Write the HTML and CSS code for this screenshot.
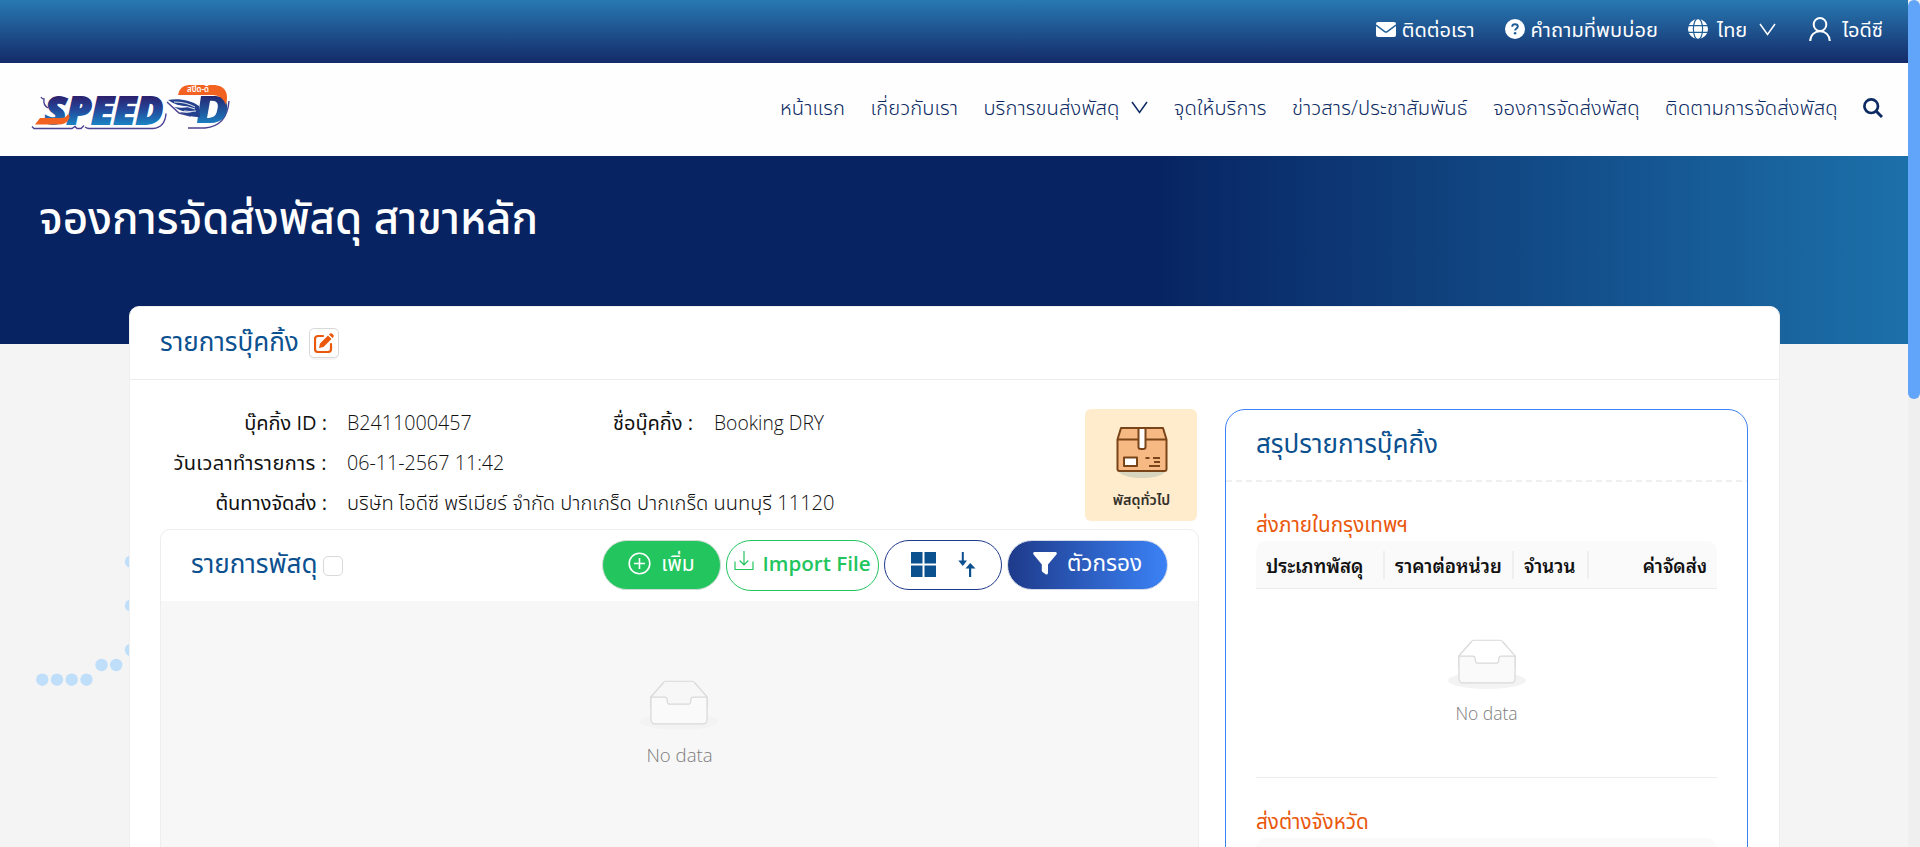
FILE: index.html
```html
<!DOCTYPE html>
<html lang="th">
<head>
<meta charset="utf-8">
<title>SPEED-D</title>
<link rel="stylesheet" href="styles.css">
</head>
<body>
<svg class="defs" width="0" height="0">
  <symbol id="empty" viewBox="0 0 64 41">
    <g transform="translate(0 1)" fill="none">
      <ellipse fill="#f3f3f3" cx="32" cy="33" rx="32" ry="7"/>
      <g stroke="#d9d9d9">
        <path d="M55 12.76L44.854 1.258C44.367.474 43.656 0 42.907 0H21.093c-.749 0-1.46.474-1.947 1.257L9 12.761V22h46v-9.24z"/>
        <path fill="#fafafa" d="M41.613 15.931c0-1.605.994-2.93 2.227-2.931H55v18.137C55 33.26 53.68 35 52.05 35h-40.1C10.32 35 9 33.259 9 31.137V13h11.16c1.233 0 2.227 1.323 2.227 2.928v.022c0 1.605 1.005 2.901 2.237 2.901h14.752c1.232 0 2.237-1.308 2.237-2.913v-.007z"/>
      </g>
    </g>
  </symbol>
</svg>
<div class="page">
  <div class="topbar">
    <a class="top-link contact"><svg width="20" height="15" viewBox="0 0 20 15"><rect width="20" height="15" rx="2" fill="#fff"/><path d="M0 3l8.7 6.6a2.2 2.2 0 0 0 2.6 0L20 3" fill="none" stroke="#1f5f97" stroke-width="1.4"/></svg><span>ติดต่อเรา</span></a>
    <a class="top-link faq"><svg width="20" height="20" viewBox="0 0 20 20"><circle cx="10" cy="10" r="10" fill="#fff"/><path d="M7.2 7.7C7.3 6 8.4 5.3 10 5.3c1.700 0 2.800.9 2.800 2.300 0 1.900-2.700 2-2.700 4" fill="none" stroke="#1f5f97" stroke-width="2"/><circle cx="10.100" cy="14.300" r="1.300" fill="#1f5f97"/></svg><span>คำถามที่พบบ่อย</span></a>
    <a class="top-link lang"><svg width="20" height="20" viewBox="0 0 20 20"><circle cx="10" cy="10" r="10" fill="#fff"/><g fill="none" stroke="#1f5f97" stroke-width="1.200"><ellipse cx="10" cy="10" rx="4.600" ry="10.500"/><path d="M0 6.700h20M0 13.300h20"/></g></svg><span>ไทย</span><svg class="chev" width="17" height="13" viewBox="0 0 17 13"><path d="M1 1l7.500 10.500L16 1" fill="none" stroke="#fff" stroke-width="1.500"/></svg></a>
    <a class="top-link user"><svg width="22" height="24" viewBox="0 0 22 24" fill="none" stroke="#fff" stroke-width="2"><ellipse cx="11" cy="7.500" rx="6.300" ry="6.500"/><path d="M1.200 24C1.500 18 5.500 14.300 11 14.300s9.500 3.700 9.800 9.700"/></svg><span>ไอดีซี</span></a>
  </div>

  <header class="header">
    <svg class="logo" width="210" height="65" viewBox="0 0 210 65">
      <defs>
        <linearGradient id="ink" gradientUnits="userSpaceOnUse" x1="0" y1="-28" x2="0" y2="0"><stop offset="0" stop-color="#2c1e6b"/><stop offset=".5" stop-color="#24479a"/><stop offset="1" stop-color="#1b7fc0"/></linearGradient>
        <linearGradient id="dInk" gradientUnits="userSpaceOnUse" x1="0" y1="20" x2="0" y2="50"><stop offset="0" stop-color="#25246f"/><stop offset="1" stop-color="#1b82c4"/></linearGradient>
      </defs>
      <path d="M11 22q1 2 3 2-1 6 4 9M2 51.500l2 2h38l3-2 2 2h4l3-3M55 52q2 1.500 4 1.500h64q12-1 13-15" fill="none" stroke="#4a4293" stroke-width="1.400"/>
      <text class="logo-word" transform="translate(15 48.500)" textLength="118" lengthAdjust="spacingAndGlyphs" fill="url(#ink)" stroke="url(#ink)" stroke-width="1.800">SPEED</text>
      <path d="M5 49.500l5-6.500h21q5 0 7-4 3 3 0 6.500-3 4-9 4z" fill="#f26322"/>
      <path d="M137 27l12 11 12 3M158 53h17q22-2 24-27" fill="none" stroke="#4a4293" stroke-width="1.400"/>
      <path d="M171 21l-4 27h13c13 0 18-8 17-18-1-7-6-9-14-9zm9 5c8-1 9 4 7 10-1 5-4 7-10 7z" fill="url(#dInk)" fill-rule="evenodd"/>
      <path d="M148 20q2-10 11-10h24c13 0 16 9 13 20q-4-10-13-10z" fill="#f26322"/>
      <text class="logo-th" x="157" y="17" textLength="22" lengthAdjust="spacingAndGlyphs" fill="#fff">สปีด-ดี</text>
      <path d="M138 25c10-2 23 0 31 6l1 11c-8 0-15-2-20-5 5 1 9 1 12 0-8 0-13-2-18-5 6 1 10 1 14 0-8-1-14-3-20-7z" fill="#24418f"/>
      <path d="M144 27q12 0 21 5M149 31q9 0 16 3M154 36q6 1 12 0" fill="none" stroke="#fff" stroke-width=".9"/>
    </svg>
    <nav class="nav">
      <a>หน้าแรก</a><a>เกี่ยวกับเรา</a>
      <a class="has-menu">บริการขนส่งพัสดุ<svg width="17" height="13" viewBox="0 0 17 13"><path d="M1 1l7.500 10.500L16 1" fill="none" stroke="#0c2a63" stroke-width="1.500"/></svg></a>
      <a>จุดให้บริการ</a><a>ข่าวสาร/ประชาสัมพันธ์</a><a>จองการจัดส่งพัสดุ</a><a>ติดตามการจัดส่งพัสดุ</a>
      <svg class="search" width="20" height="20" viewBox="0 0 20 20" fill="none" stroke="#0c2a63"><circle cx="8.200" cy="8.200" r="6.800" stroke-width="2.700"/><path d="M13 13l6 6" stroke-width="3"/></svg>
    </nav>
  </header>

  <section class="hero"><h1>จองการจัดส่งพัสดุ สาขาหลัก</h1></section>

  <svg class="dots" width="110" height="132" viewBox="0 0 110 132" fill="#bfdefa"><circle cx="102" cy="7.700" r="6.200"/><circle cx="102" cy="51.700" r="6.200"/><circle cx="102" cy="96" r="6.200"/><circle cx="72.500" cy="111" r="6.200"/><circle cx="87.200" cy="111" r="6.200"/><circle cx="13.300" cy="125.700" r="6.200"/><circle cx="28" cy="125.700" r="6.200"/><circle cx="42.700" cy="125.700" r="6.200"/><circle cx="57.500" cy="125.700" r="6.200"/></svg>

  <main class="card">
    <div class="card-head">
      <h2>รายการบุ๊คกิ้ง</h2>
      <button class="edit"><svg width="20" height="20" viewBox="0 0 20 20"><path d="M9 3H4a3 3 0 0 0-3 3v10a3 3 0 0 0 3 3h10a3 3 0 0 0 3-3v-5" fill="none" stroke="#ea580c" stroke-width="2.200" stroke-linecap="round"/><path d="M5 15l1-4.500 8-8L17.500 6l-8 8zM15 1.500l1-.9q1-.8 2 0l1.400 1.400q.8 1 0 2l-.9 1z" fill="#ea580c"/></svg></button>
    </div>
    <div class="card-body">
      <div class="left">
        <div class="info-row">
          <div class="info">
            <div class="label">บุ๊คกิ้ง ID :</div><div class="value">B2411000457</div>
            <div class="label">ชื่อบุ๊คกิ้ง :</div><div class="value booking">Booking DRY</div>
            <div class="label loose">วันเวลาทำรายการ :</div><div class="value wide">06-11-2567 11:42</div>
            <div class="label">ต้นทางจัดส่ง :</div><div class="value wide addr">บริษัท ไอดีซี พรีเมียร์ จำกัด ปากเกร็ด ปากเกร็ด นนทบุรี 11120</div>
          </div>
          <div class="type">
            <svg width="52" height="54" viewBox="0 0 52 54"><ellipse cx="26" cy="44" rx="24" ry="8" fill="#d8d5bf"/><g stroke="#7a4419" stroke-width="2" stroke-linejoin="round"><path d="M1.500 13.500L5 2h42l3.500 11.500V43q0 2-2 2h-45q-2 0-2-2z" fill="#f7b983"/><path d="M1.500 13.500h49" fill="none"/><path d="M22.500 2h7v19q0 2-2 2h-3q-2 0-2-2z" fill="#fff"/><path d="M8 31.500h13v8.500H8z" fill="#fff"/><path d="M29.500 32h4M37 32h7M38 36h6M33 40h11" fill="none"/></g></svg>
            <span>พัสดุทั่วไป</span>
          </div>
        </div>
        <div class="items">
          <div class="items-head">
            <h2>รายการพัสดุ</h2><span class="check"></span>
            <div class="actions">
              <button class="btn add"><svg width="23" height="23" viewBox="0 0 23 23" fill="none" stroke="#fff" stroke-width="1.600"><circle cx="11.500" cy="11.500" r="10.300"/><path d="M11.500 6v11M6 11.500h11"/></svg>เพิ่ม</button>
              <button class="btn import"><svg class="inbox" width="20" height="20" viewBox="0 0 20 20" fill="none" stroke="#22c55e" stroke-width="1.200"><path d="M1 10.500v8h18v-8M10 0v14M5.700 9.500L10 14l4.300-4.500"/></svg>Import File</button>
              <button class="btn tools"><svg width="25" height="25" viewBox="0 0 25 25" fill="#0b508f"><path d="M0 0h11.500v11.500H0zM13.500 0H25v11.500H13.500zM0 13.500h11.500V25H0zM13.500 13.500H25V25H13.500z"/></svg><svg width="18" height="25" viewBox="0 0 18 25" fill="#0b508f"><path d="M3.800 0h2v8.500H9L4.800 14 .3 8.500h3.500zM11 25h2.200v-8.500H17.500L12.200 11 7.500 16.500H11z"/></svg></button>
              <button class="btn filter"><svg width="24" height="23" viewBox="0 0 24 23" fill="#fff"><path d="M1.300 0h21.400q1.900.8.700 2.500L15 12.500V21q-.3 2-2 1.500L9.500 20q-.7-.6-.7-1.500v-6L.6 2.500Q-.6.800 1.300 0z"/></svg>ตัวกรอง</button>
            </div>
          </div>
          <div class="items-body"><svg class="empty"><use href="#empty"/></svg><p>No data</p></div>
        </div>
      </div>

      <aside class="summary">
        <div class="summary-head"><h2>สรุปรายการบุ๊คกิ้ง</h2></div>
        <div class="summary-body">
          <h3>ส่งภายในกรุงเทพฯ</h3>
          <div class="thead"><span>ประเภทพัสดุ</span><span>ราคาต่อหน่วย</span><span>จำนวน</span><span>ค่าจัดส่ง</span></div>
          <div class="tbody"><svg class="empty"><use href="#empty"/></svg><p>No data</p></div>
          <h3 class="second">ส่งต่างจังหวัด</h3>
          <div class="thead"></div>
        </div>
      </aside>
    </div>
  </main>
</div>
<div class="scrollbar"><div class="thumb"></div></div>
</body>
</html>
```
FILE: styles.css
```css
* { box-sizing: border-box; }
body {
  margin: 0; height: 847px; overflow: hidden; display: flex;
  background: #f4f4f4; color: #111;
  font-family: "Open Sans", "Noto Sans Thai", sans-serif; font-size: 20px;
}
h1, h2, h3, p { margin: 0; font-weight: 400; white-space: nowrap; }
svg { display: block; flex: none; }
button { font: inherit; padding: 0; }
.defs { position: absolute; }
.page { width: 1908px; height: 847px; overflow: hidden; position: relative; }

.scrollbar { width: 12px; background: #efefef; }
.thumb { height: 399px; border-radius: 6px; background: #60a5fa; }

.topbar {
  height: 63px; padding: 0 25px 5px 0;
  display: flex; justify-content: flex-end; align-items: center; gap: 30px;
  background: linear-gradient(#2879b2, #142b69);
  color: #fff; line-height: 28px; white-space: nowrap;
}
.top-link { display: flex; align-items: center; }
.top-link span { padding-top: 1px; }
.contact { gap: 6px; }
.faq { gap: 6px; letter-spacing: .1px; }
.lang { gap: 9px; }
.chev { margin-left: 3px; }
.user { gap: 11px; margin-left: 3px; }

.header {
  height: 93px; padding: 0 25px 0 30px;
  display: flex; align-items: center; justify-content: space-between;
  background: #fefefe;
}
.logo { margin-bottom: 4px; }
.logo-word { font-family: "Open Sans", sans-serif; font-weight: 800; font-style: italic; font-size: 37px; }
.logo-th { font-family: "Noto Sans Thai", sans-serif; font-weight: 600; font-size: 8px; }
.nav {
  display: flex; align-items: center; gap: 25.300px; padding-bottom: 4px;
  color: #0c2a63; font-size: 20.200px; font-weight: 350; letter-spacing: .12px; line-height: 28px; white-space: nowrap;
}
.nav a { padding-bottom: 1px; }
.has-menu { display: flex; align-items: center; gap: 12px; }

.hero {
  height: 188px; padding: 31px 39px;
  background: linear-gradient(90deg, #072361 60%, #1c70aa);
}
.hero h1 { color: #fff; font-size: 43.800px; font-weight: 500; line-height: 60px; }

.dots { position: absolute; left: 29px; top: 554px; }

.card {
  position: relative; width: 1651px; height: 600px; margin: -38px 0 0 129px;
  background: #fff; border: 1px solid #efefef; border-radius: 10px 10px 0 0;
}
h2 { color: #0b508f; font-size: 26px; line-height: 36px; }
.card-head {
  height: 73px; padding: 0 30px 1px 30px; display: flex; align-items: center; gap: 10px;
  border-bottom: 1px solid #ededed;
}
.card-head h2 { padding-bottom: 4px; line-height: 30px; }
.edit {
  width: 30px; height: 30px; display: grid; place-items: center;
  background: #fff; border: 1px solid #d9d9d9; border-radius: 5px; box-shadow: 0 2px 1px #0000000a;
}
.card-body { display: flex; gap: 26px; padding: 29px 30px 0; }
.left { width: 1039px; }
.info-row { display: flex; justify-content: space-between; height: 120px; padding-right: 2px; }
.info {
  display: grid; grid-template-columns: 167px 207px 159px 1fr; grid-auto-rows: 28px; row-gap: 12px;
  line-height: 28px; white-space: nowrap;
}
.label { text-align: right; font-weight: 450; }
.loose { letter-spacing: .4px; }
.value { padding-left: 20px; font-size: 19.700px; font-weight: 350; }
.booking { padding-left: 21px; font-size: 19.300px; }
.wide { grid-column: span 3; }
.addr { font-size: 20.100px; }
.type {
  width: 112px; height: 112px; padding-top: 17px; border-radius: 6px; background: #feeccd;
  display: flex; flex-direction: column; align-items: center; gap: 10px;
  font-size: 14.300px; font-weight: 600; line-height: 20px; color: #33302b;
}
.type svg { margin-left: 2px; }
.type span { margin-left: 1px; }

.items { height: 400px; border: 1px solid #ededed; border-radius: 10px 10px 0 0; }
.items-head { height: 71px; padding: 0 30px 0 30px; display: flex; align-items: center; }
.items-head h2 { padding-bottom: 6px; }
.check { width: 20px; height: 20px; margin: 1px 0 0 5px; border: 1px solid #d9d9d9; border-radius: 5px; }
.actions { display: flex; gap: 5px; margin-left: auto; }
.btn {
  height: 50px; padding-bottom: 4px; border-radius: 25px; border: 1px solid; background: #fff;
  display: flex; align-items: center; justify-content: center; line-height: 28px; white-space: nowrap;
}
.add { width: 119px; gap: 10px; background: #22c55e; border-color: #d0dcd4; color: #fff; font-size: 21px; }
.import { width: 153px; height: 51px; gap: 8px; padding-bottom: 5px; border-color: #22c55e; color: #22c55e; font-size: 20.600px; font-weight: 550; }
.inbox { margin-bottom: 4px; }
.tools { width: 118px; gap: 22px; padding-bottom: 1px; border-color: #1e3a8a; }
.filter { width: 161px; gap: 10px; background: linear-gradient(90deg, #1e3a8a, #3b82f6); border-color: #d3d9e6; color: #fff; font-size: 22.600px; }
.items-body { height: 340px; padding-top: 79px; background: #f7f7f7; }
.empty { width: 78px; height: 50px; margin: 0 auto 15px; }
p { text-align: center; font-size: 18.600px; font-weight: 350; line-height: 20px; color: #7c7c7c; }
.items-body .empty { position: relative; left: -1px; }

.summary { width: 523px; height: 500px; border: 1px solid #3b82f6; border-radius: 20px 20px 0 0; }
.summary-head {
  height: 72px; padding: 0 30px 7px; display: flex; align-items: center;
  background: repeating-linear-gradient(90deg, #efefef 0 6px, transparent 6px 10px) bottom / 100% 2px no-repeat;
}
.summary-body { padding: 28px 30px 0 30px; }
h3 { height: 31px; line-height: 28px; font-size: 20.700px; color: #ea580c; }
.second { margin-top: 29px; }
.thead {
  height: 48px; display: grid; grid-template-columns: 129px 129px 75px 1fr; align-items: center;
  background: #fafafa; border-bottom: 1px solid #ececec; border-radius: 10px 10px 0 0;
  font-family: "Noto Sans Thai Looped", "Noto Sans Thai", sans-serif; font-size: 18.700px; font-weight: 600;
}
.thead span { height: 28px; line-height: 28px; padding-left: 10px; border-right: 2px solid #efefef; white-space: nowrap; }
.thead span:last-child { padding-right: 10px; border: 0; text-align: right; }
.tbody { height: 189px; padding-top: 50px; border-bottom: 1px solid #ececec; }
.tbody .empty { margin-bottom: 14px; }
.tbody p { font-size: 17.500px; }
```
